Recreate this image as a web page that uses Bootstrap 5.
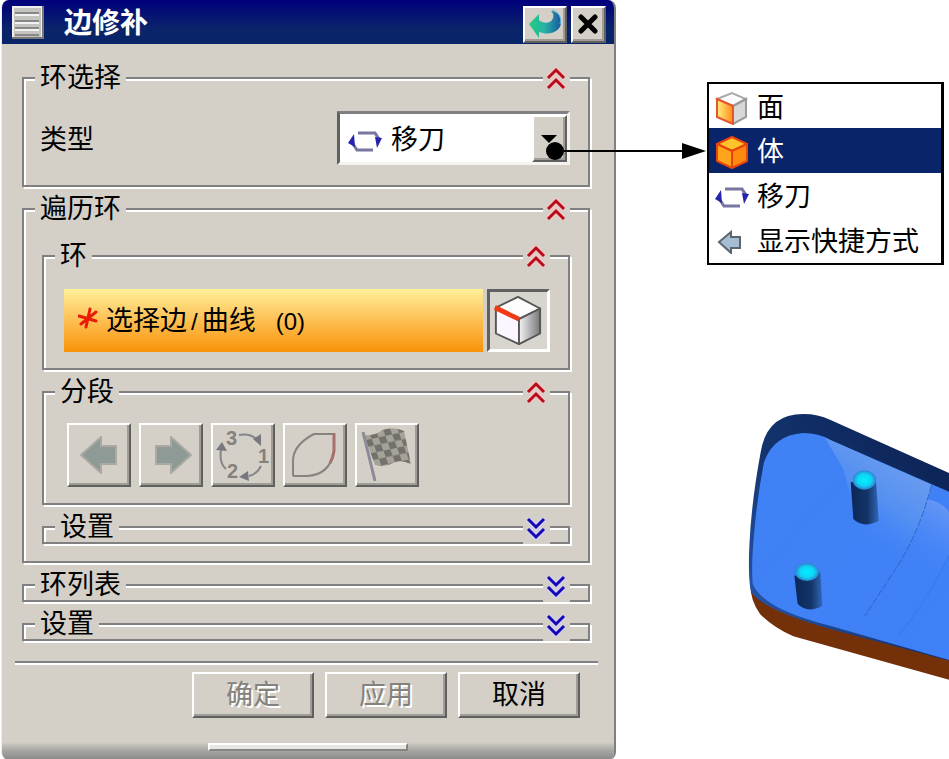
<!DOCTYPE html>
<html lang="zh-CN">
<head>
<meta charset="utf-8">
<meta name="viewport" content="width=device-width, initial-scale=1">
<title>边修补</title>
<link href="https://cdn.jsdelivr.net/npm/bootstrap@5.3.0/dist/css/bootstrap.min.css" rel="stylesheet">
<style>
  :root { --face: #d4d0c8; --shade: #808080; --navy: #0a246a; }
  body { font-family: "Liberation Sans", "Noto Sans CJK SC", sans-serif; font-size: 27px; line-height: 30px; color: #000; background: #fff; }
  svg { display: block; flex: none; }
  .dialog-side { flex: 65 1 0; min-width: 0; padding: 0 2px 0 1px; }
  .extra-side { flex: 35 1 0; min-width: 0; }
  .dialog { background: var(--face); border-left: 1px solid #eeece8; border-right: 2px solid var(--shade); border-radius: 8px; overflow: hidden; }
  .title-bar { height: 44px; padding: 0 8px 0 10px; background: linear-gradient(#00007c, var(--navy) 65%); color: #fff; }
  .title-bar h1 { font-size: 28px; line-height: 30px; font-weight: 700; }
  .bevel { background: var(--face); border: 2px solid; border-color: #fff #606060 #606060 #fff; border-radius: 0; box-shadow: inset -2px -2px 0 #a09d97; color: #000; padding: 0; }
  .title-btn { height: 37px; width: 44px; }
  .title-btn.narrow { width: 35px; }
  .dialog-body { padding: 33px 24px 0 20px; }
  .group { border: 2px solid var(--shade); box-shadow: 2px 2px 0 #fff, inset 2px 2px 0 #fff; margin-bottom: 21px; }
  .group-head { height: 30px; margin-top: -16px; padding: 0 18px 0 11px; }
  .group-head h2 { font-size: 27px; line-height: 30px; padding: 0 5px; background: var(--face); height: 30px; }
  .fold { border: 0; background: var(--face); width: 27px; height: 30px; padding: 2px 0 0; }
  .folded .fold { height: 32px; padding: 0; }
  .group-body { padding: 18px 18px 14px 16px; }
  .group-body.tools { padding: 16px 18px 16px 15px; }
  .group-body.outer { padding: 31px 18px 17px 18px; }
  .group-body.outer > :last-child { margin-bottom: 0; }
  .type-field { width: 233px; }
  .type-select { appearance: none; height: 54px; padding: 3px 36px 0 51px; background: #fff; color: #000; border: 3px solid; border-color: #808080 #f4f3f0 #f4f3f0 #606060; border-radius: 0; font-size: 27px; }
  .type-icon { position: absolute; left: 11px; top: 19px; pointer-events: none; }
  .type-arrow { position: absolute; right: 3px; top: 4px; bottom: 3px; width: 35px; pointer-events: none; }
  .pick { min-height: 63px; background: linear-gradient(#fff09a, #fdc45a 45%, #f99208); padding: 2px 14px 0; }
  .pick-btn { width: 63px; height: 63px; background: #d8d5ce; border: 3px solid; border-color: #606060 #fff #fff #606060; border-radius: 0; padding: 0; }
  .latin { font-size: 24px; }
  .count { margin-left: 20px; }
  .tool { width: 64px; height: 64px; opacity: 1; }
  .tool:disabled { color: #808080; }
  .rule { height: 4px; background: linear-gradient(#808080 50%, #fff 50%); margin: -1px -8px 7px -7px; }
  .commands { gap: 11px; padding-right: 10px; }
  .cmd { width: 122px; height: 46px; font-size: 27px; line-height: 30px; }
  .cmd:disabled { color: #85827d; text-shadow: 2px 2px 0 #fff; }
  .grip-bar { height: 42px; padding-top: 25px; background: linear-gradient(var(--face) 24px, #aaa8a4 32px, #888 42px); }
  .grip { width: 200px; height: 8px; background: #e8e6e0; border: 2px solid; border-color: #fff #858585 #858585 #fff; }
  .menu { width: 237px; border: 2px solid #000; border-right-width: 3px; border-radius: 0; margin: 82px 5px 0 0; }
  .menu .menu-row { height: 45px; border: 0; padding: 2px 0 0 6px; background: #fff; color: #000; line-height: 30px; gap: 8px; }
  .menu .menu-row.active { background: var(--navy); color: #fff; }
  .menu-row svg { width: 34px; }
  .leader { position: absolute; left: 57.5%; right: 25.6%; top: 142px; height: 18px; pointer-events: none; }
  .leader-dot { width: 18px; height: 18px; border-radius: 50%; background: #000; }
  .leader-line { height: 2px; background: #000; }
  .leader-head { border-left: 24px solid #000; border-top: 8px solid transparent; border-bottom: 8px solid transparent; }
  .part { margin-top: 134px; }
</style>
<script src="https://cdn.jsdelivr.net/npm/bootstrap@5.3.0/dist/js/bootstrap.bundle.min.js"></script>
</head>
<body>
<svg width="0" height="0" class="position-absolute" aria-hidden="true">
  <defs>
    <symbol id="up" viewBox="0 0 20 24"><path d="M2 11l8-8 8 8M2 21l8-8 8 8" fill="none" stroke="#efc8c4" stroke-width="6"/><path d="M2 11l8-8 8 8M2 21l8-8 8 8" fill="none" stroke="#b80c1c" stroke-width="3"/></symbol>
    <symbol id="down" viewBox="0 0 20 24"><path d="M2 3l8 8 8-8M2 13l8 8 8-8" fill="none" stroke="#d3d0f0" stroke-width="6"/><path d="M2 3l8 8 8-8M2 13l8 8 8-8" fill="none" stroke="#1408b4" stroke-width="3"/></symbol>
    <symbol id="loop" viewBox="0 0 34 22"><path d="M10 3h17l4 6M25 20H9l-4-6" fill="none" stroke="#7676a0" stroke-width="3"/><path d="M6 4L0 13l7 4zM27 7l7 1-5 10z" fill="#2424ac"/></symbol>
  </defs>
</svg>
<main class="position-relative d-flex align-items-start overflow-hidden">
  <div class="dialog-side">
    <section class="dialog" aria-label="边修补">
      <header class="title-bar d-flex align-items-center">
        <svg width="32" height="33" viewBox="0 0 32 33"><path d="M0 0h32v33H0z" fill="#777"/><path d="M0 0h30v31H0z" fill="#eee"/><path d="M2 2h27v29H2z" fill="#c4c3c0"/><path d="M3 7h24M3 15h24M3 22h24M3 29h24" stroke="#888" stroke-width="2"/><path d="M3 9h24M3 17h24M3 24h24" stroke="#f2f2f2" stroke-width="2"/></svg>
        <h1 class="mb-0 ms-3 ps-1 pt-1 me-auto">边修补</h1>
        <button class="bevel title-btn mt-1 d-flex align-items-center justify-content-center" type="button" aria-label="重置">
          <svg width="34" height="30" viewBox="0 0 34 30"><defs><linearGradient id="reset"><stop stop-color="#24cc80"/><stop offset=".5" stop-color="#28b0a8"/><stop offset="1" stop-color="#1858a0"/></linearGradient></defs><path d="M1 15L11 5v6c4 4 12 4 14-2 1-3 0-5-2-7 6 0 10 5 10 11 0 9-10 13-18 11l-4-1v6z" fill="url(#reset)"/><path d="M24 1c7 1 10 8 8 14" fill="none" stroke="#6ab8e0" stroke-width="1"/></svg>
        </button>
        <button class="bevel title-btn narrow mt-1 ms-1 d-flex align-items-center justify-content-center" type="button" aria-label="关闭">
          <svg width="20" height="20" viewBox="0 0 20 20"><path d="M3 3l14 14M17 3L3 17" stroke="#000" stroke-width="5" stroke-linecap="round"/></svg>
        </button>
      </header>

      <div class="dialog-body">
        <section class="group">
          <div class="group-head d-flex justify-content-between"><h2 class="mb-0 fw-normal">环选择</h2><button class="fold d-flex align-items-center justify-content-center" type="button" aria-label="折叠环选择"><svg width="20" height="24"><use href="#up"/></svg></button></div>
          <div class="group-body d-flex align-items-center justify-content-between pb-3 mb-1">
            <label for="type" class="pt-1">类型</label>
            <div class="type-field position-relative">
              <select id="type" class="type-select w-100"><option>面</option><option>体</option><option selected>移刀</option></select>
              <svg class="type-icon" width="34" height="22"><use href="#loop"/></svg>
              <span class="type-arrow bevel d-flex align-items-center justify-content-center"><svg width="16" height="8" viewBox="0 0 16 8"><path d="M0 0h16L8 8z"/></svg></span>
            </div>
          </div>
        </section>

        <section class="group">
          <div class="group-head d-flex justify-content-between"><h2 class="mb-0 fw-normal">遍历环</h2><button class="fold d-flex align-items-center justify-content-center" type="button" aria-label="折叠遍历环"><svg width="20" height="24"><use href="#up"/></svg></button></div>
          <div class="group-body outer">
            <section class="group">
              <div class="group-head d-flex justify-content-between"><h2 class="mb-0 fw-normal">环</h2><button class="fold d-flex align-items-center justify-content-center" type="button" aria-label="折叠环"><svg width="20" height="24"><use href="#up"/></svg></button></div>
              <div class="group-body d-flex gap-1 pb-3">
                <div class="pick flex-grow-1 d-flex align-items-center ms-1">
                  <svg width="20" height="22" viewBox="0 0 20 22" class="mb-2"><path d="M12 2L8 20M1 9l17 5M18 5L3 17" fill="none" stroke="#e81c08" stroke-width="3" stroke-linecap="round"/></svg>
                  <span class="ms-2">选择边<span class="latin mx-1">/</span>曲线<span class="latin count">(0)</span></span>
                </div>
                <button class="pick-btn d-flex align-items-center justify-content-center" type="button" aria-label="选择曲线">
                  <svg width="50" height="52" viewBox="0 0 52 54"><defs><linearGradient id="side"><stop stop-color="#f4f4f4"/><stop offset="1" stop-color="#777"/></linearGradient></defs><g stroke="#555" stroke-width="2" stroke-linejoin="round"><path d="M3 13L26 2l23 12-22 11z" fill="#fdfdfd"/><path d="M3 13l24 12v26L3 40z" fill="#fbf6ff"/><path d="M27 25l22-11v26L27 51z" fill="url(#side)"/></g><path d="M2 13l25 12" stroke="#f03a16" stroke-width="5"/></svg>
                </button>
              </div>
            </section>

            <section class="group">
              <div class="group-head d-flex justify-content-between"><h2 class="mb-0 fw-normal">分段</h2><button class="fold d-flex align-items-center justify-content-center" type="button" aria-label="折叠分段"><svg width="20" height="24"><use href="#up"/></svg></button></div>
              <div class="group-body tools d-flex gap-2">
                <button class="bevel tool ms-2 d-flex align-items-center justify-content-center" type="button" disabled aria-label="上一段"><svg width="38" height="38" viewBox="0 0 38 38"><path d="M1 19L21 1v9h15v18H21v9z" fill="#8d9a96" stroke="#aaa9a2" stroke-width="2"/></svg></button>
                <button class="bevel tool d-flex align-items-center justify-content-center" type="button" disabled aria-label="下一段"><svg width="38" height="38" viewBox="0 0 38 38" class="ms-1"><path d="M37 19L17 1v9H2v18h15v9z" fill="#8d9a96" stroke="#aaa9a2" stroke-width="2"/></svg></button>
                <button class="bevel tool d-flex align-items-center justify-content-center" type="button" disabled aria-label="循环"><svg width="56" height="56" viewBox="0 0 56 56"><g fill="none" stroke="#85858a" stroke-width="2"><path d="M24 8q12-2 18 5M6 23q-2 13 5 19M46 39q-4 8-12 10"/></g><path d="M38 12l8-5v12zM1 23l6-8 5 9zM24 50l9-6 1 10z" fill="#78787f"/><g fill="#85827e" font-family="Liberation Sans" font-size="20" font-weight="700"><text x="11" y="18">3</text><text x="43" y="36">1</text><text x="12" y="51">2</text></g></svg></button>
                <button class="bevel tool d-flex align-items-center justify-content-center" type="button" disabled aria-label="闭合"><svg width="50" height="50" viewBox="0 0 50 50"><path d="M3 46V31Q3 15 24 4h20M3 46h14q23-1 27-25" fill="none" stroke="#85857f" stroke-width="2"/><path d="M44 3v18q-1 7-4 12" fill="none" stroke="#a8706c" stroke-width="3"/></svg></button>
                <button class="bevel tool d-flex align-items-center justify-content-center" type="button" disabled aria-label="结束"><svg width="54" height="56" viewBox="0 0 54 56"><defs><pattern id="check" width="14" height="14" patternUnits="userSpaceOnUse" patternTransform="rotate(-12) skewX(8)"><path d="M0 0h14v14H0z" fill="#a5a297"/><path d="M0 0h7v7H0zM7 7h7v7H7z" fill="#74716c"/></pattern></defs><path d="M4 8Q16 9 22 3q12-4 22 1l7 33q-11-5-18-1-8 5-18 2z" fill="url(#check)"/><path d="M3 5l12 49" stroke="#8c8a98" stroke-width="3"/></svg></button>
              </div>
            </section>

            <section class="group folded">
              <div class="group-head d-flex justify-content-between"><h2 class="mb-0 fw-normal">设置</h2><button class="fold d-flex align-items-center justify-content-center" type="button" aria-label="展开分段设置"><svg width="20" height="24"><use href="#down"/></svg></button></div>
            </section>
          </div>
        </section>

        <section class="group folded">
          <div class="group-head d-flex justify-content-between"><h2 class="mb-0 fw-normal">环列表</h2><button class="fold d-flex align-items-center justify-content-center" type="button" aria-label="展开环列表"><svg width="20" height="24"><use href="#down"/></svg></button></div>
        </section>
        <section class="group folded">
          <div class="group-head d-flex justify-content-between"><h2 class="mb-0 fw-normal">设置</h2><button class="fold d-flex align-items-center justify-content-center" type="button" aria-label="展开设置"><svg width="20" height="24"><use href="#down"/></svg></button></div>
        </section>

        <div class="rule"></div>
        <div class="commands d-flex justify-content-end">
          <button class="bevel cmd" type="button" disabled>确定</button>
          <button class="bevel cmd" type="button" disabled>应用</button>
          <button class="bevel cmd" type="button">取消</button>
        </div>
      </div>
      <div class="grip-bar d-flex justify-content-center"><div class="grip"></div></div>
    </section>
  </div>

  <div class="extra-side d-flex flex-column align-items-end">
    <div class="menu list-group">
      <button type="button" class="menu-row list-group-item d-flex align-items-center"><svg width="34" height="34" viewBox="0 0 34 34"><defs><linearGradient id="face"><stop stop-color="#fff080"/><stop offset="1" stop-color="#ff8a18"/></linearGradient></defs><path d="M2 8L17 2l14 6-13 7z" fill="#fdfdfd" stroke="#aaa" stroke-width="2"/><path d="M18 15l13-7v18l-13 7z" fill="#d8d8d8" stroke="#999" stroke-width="2"/><path d="M2 8l16 7v18L2 26z" fill="url(#face)" stroke="#e8542c" stroke-width="2"/></svg>面</button>
      <button type="button" class="menu-row active list-group-item d-flex align-items-center"><svg width="34" height="34" viewBox="0 0 34 34"><g stroke="#e8440c" stroke-width="2" stroke-linejoin="round"><path d="M2 9L17 2l15 7-15 7z" fill="#ffc42c"/><path d="M2 9l15 7v17L2 26z" fill="#ffa51c"/><path d="M17 16l15-7v17l-15 7z" fill="#ff8a10"/></g></svg>体</button>
      <button type="button" class="menu-row list-group-item d-flex align-items-center"><svg width="34" height="22"><use href="#loop"/></svg>移刀</button>
      <button type="button" class="menu-row list-group-item d-flex align-items-center"><svg width="34" height="24" viewBox="0 0 34 24"><path d="M4 12L16 2v5h9v11h-9v5z" fill="#a5bed4" stroke="#5c666e" stroke-width="2"/></svg>显示快捷方式</button>
    </div>

    <svg class="part" width="219" height="300" viewBox="0 0 657 900" role="img" aria-label="零件模型">
      <defs>
        <linearGradient id="rim" x1="0" y1="1" x2="1" y2="0"><stop stop-color="#2c60c0"/><stop offset=".45" stop-color="#143470"/><stop offset="1" stop-color="#0a2050"/></linearGradient>
        <linearGradient id="floor" x1="0" y1="0" x2="1" y2="1"><stop stop-color="#3f82f4"/><stop offset="1" stop-color="#4080f8"/></linearGradient>
        <linearGradient id="shine" gradientUnits="userSpaceOnUse" x1="560" y1="220" x2="410" y2="430"><stop stop-color="#6a9cee"/><stop offset=".5" stop-color="#5490f2"/><stop offset="1" stop-color="#4284f8" stop-opacity="0"/></linearGradient>
        <linearGradient id="curve" gradientUnits="userSpaceOnUse" x1="640" y1="320" x2="540" y2="500"><stop stop-color="#6496f4"/><stop offset="1" stop-color="#4284f8" stop-opacity="0"/></linearGradient>
        <linearGradient id="pin"><stop stop-color="#0a2858"/><stop offset=".6" stop-color="#143468"/><stop offset="1" stop-color="#3068b8"/></linearGradient>
        <radialGradient id="tip"><stop stop-color="#00f0ff"/><stop offset=".6" stop-color="#10d4f4"/><stop offset="1" stop-color="#2c84d0"/></radialGradient>
      </defs>
      <path d="M62 550Q90 610 200 650L657 780v62L190 712Q130 685 90 645Q58 600 62 550z" fill="#743008"/>
      <path d="M62 575Q54 530 58 440Q64 310 92 160Q110 45 220 45Q265 45 300 62L657 222V785L300 690Q90 630 62 575z" fill="url(#rim)"/>
      <path d="M68 555Q64 500 70 430Q80 300 102 190Q130 108 220 102Q265 102 300 122L657 278V783L300 680Q100 630 68 555z" fill="url(#floor)"/>
      <path d="M285 116L605 257Q575 400 490 520L440 590L340 210z" fill="url(#shine)"/>
      <path d="M590 300Q640 310 657 340V470Q590 610 505 710L400 650L440 590Q550 460 590 300z" fill="url(#curve)"/>
      <path d="M605 257Q565 410 490 520L405 650" fill="none" stroke="#2c64c8" stroke-width="3" stroke-dasharray="22 5"/>
      <path d="M657 470Q590 610 505 710" fill="none" stroke="#3b7cec" stroke-width="5"/>
      <path d="M362 250l8 110q30 30 76 5l-8-120z" fill="url(#pin)"/><ellipse cx="403" cy="243" rx="35" ry="29" fill="url(#tip)"/>
      <path d="M193 530l10 85q30 30 74 5l-6-100z" fill="url(#pin)"/><ellipse cx="231" cy="519" rx="36" ry="27" fill="url(#tip)"/>
    </svg>
  </div>

  <div class="leader d-flex align-items-center" aria-hidden="true"><span class="leader-dot"></span><span class="leader-line flex-grow-1"></span><span class="leader-head"></span></div>
</main>
</body>
</html>
